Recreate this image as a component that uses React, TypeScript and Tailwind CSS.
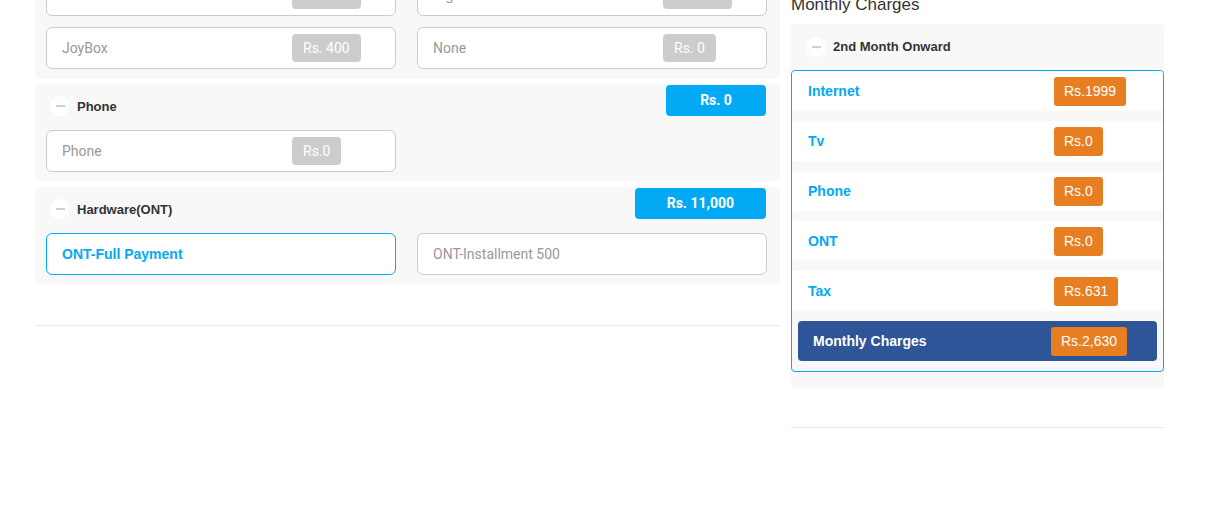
import React from "react";

const Minus = () => (
  <span className="flex h-[20px] w-[20px] items-center justify-center rounded-full bg-white">
    <span className="block h-[2px] w-[9px] bg-[#cfcfcf]" />
  </span>
);

const Input = ({ label, price, active }: { label: string; price?: string; active?: boolean }) => (
  <div
    className={
      "flex h-[42px] w-[350px] items-center rounded-[6px] border bg-white pl-[15px] " +
      (active ? "border-[#03a9f4]" : "border-[#cccccc]")
    }
  >
    <span
      className={
        "w-[230px] text-[14px] " + (active ? "font-bold text-[#03a9f4]" : "text-[#999999]")
      }
      style={{ fontFamily: active ? '"Liberation Sans", Arial, sans-serif' : "Roboto, sans-serif" }}
    >
      {label}
    </span>
    {price && (
      <span
        className="flex h-[28px] items-center rounded-[4px] bg-[#cccccc] px-[11px] text-[14px] text-white"
        style={{ fontFamily: "Roboto, sans-serif" }}
      >
        {price}
      </span>
    )}
  </div>
);

const Section = ({
  title,
  price,
  children,
}: {
  title: string;
  price?: string;
  children: React.ReactNode;
}) => (
  <div className="rounded-[4px] bg-[#f8f8f8] pl-[11px] pr-[13px] pt-[1px] pb-[9px]">
    <div className="mb-[14px] flex h-[31px] items-start justify-between">
      <div className="mt-[10px] flex items-center gap-[7px] pl-[4px]">
        <Minus />
        <span className="pt-[2px] text-[13px] font-bold text-[#333333]">{title}</span>
      </div>
      {price && (
        <span
          className="mr-[1px] flex h-[31px] min-w-[100px] items-center justify-center rounded-[4px] bg-[#03a9f4] px-[32px] text-[14px] font-bold text-white"
          style={{ fontFamily: "Roboto, sans-serif" }}
        >
          {price}
        </span>
      )}
    </div>
    <div className="flex flex-col gap-[11px]">{children}</div>
  </div>
);

const Row = ({ label, price }: { label: string; price: string }) => (
  <div className="flex h-[40px] items-center rounded-[4px] bg-white pl-[16px]">
    <span className="w-[246px] pt-[1px] text-[14px] font-bold text-[#03a9f4]">{label}</span>
    <span className="flex h-[29px] items-center rounded-[3px] bg-[#e87e22] px-[10px] text-[14px] text-white">
      {price}
    </span>
  </div>
);

export default function App() {
  return (
    <div
      className="h-[509px] w-[1223px] overflow-hidden bg-white"
      style={{ fontFamily: '"Liberation Sans", Arial, sans-serif' }}
    >
      <div className="-mt-[72px] flex gap-[11px] pl-[35px]">
        <div className="flex w-[745px] flex-col">
          <div className="flex flex-col gap-[6px]">
            <Section title="TV" price="Rs. 400">
              <div className="flex gap-[21px]">
                <Input label="Basic Cable" price="Rs. 400" />
                <Input label="Digital Box" price="Rs. 500" />
              </div>
              <div className="flex gap-[21px]">
                <Input label="JoyBox" price="Rs. 400" />
                <Input label="None" price="Rs. 0" />
              </div>
            </Section>
            <Section title="Phone" price="Rs. 0">
              <div className="flex gap-[21px]">
                <Input label="Phone" price="Rs.0" />
              </div>
            </Section>
            <Section title="Hardware(ONT)" price="Rs. 11,000">
              <div className="flex gap-[21px]">
                <Input label="ONT-Full Payment" active />
                <Input label="ONT-Installment 500" />
              </div>
            </Section>
          </div>
          <div className="mt-[41px] h-[1px] bg-[#eaeaea]" />
        </div>

        <div className="flex w-[373px] flex-col pt-[65px]">
          <div className="mb-[7px] text-[17px] leading-[24px] text-[#333333]">Monthly Charges</div>
          <div className="rounded-[4px] bg-[#f8f8f8] pb-[15px]">
            <div className="flex h-[46px] items-center gap-[7px] pl-[15px]">
              <Minus />
              <span className="text-[13px] font-bold text-[#333333]">2nd Month Onward</span>
            </div>
            <div className="flex flex-col gap-[10px] rounded-[4px] border border-[#03a9f4] pb-[10px]">
              <Row label="Internet" price="Rs.1999" />
              <Row label="Tv" price="Rs.0" />
              <Row label="Phone" price="Rs.0" />
              <Row label="ONT" price="Rs.0" />
              <Row label="Tax" price="Rs.631" />
              <div className="mx-[6px] flex h-[40px] items-center rounded-[4px] bg-[#2e5597] pl-[15px]">
                <span className="w-[238px] pt-[1px] text-[14px] font-bold text-white">Monthly Charges</span>
                <span className="flex h-[29px] items-center rounded-[3px] bg-[#e87e22] px-[10px] text-[14px] text-white">
                  Rs.2,630
                </span>
              </div>
            </div>
          </div>
          <div className="mt-[40px] h-[1px] bg-[#eaeaea]" />
        </div>
      </div>
    </div>
  );
}
